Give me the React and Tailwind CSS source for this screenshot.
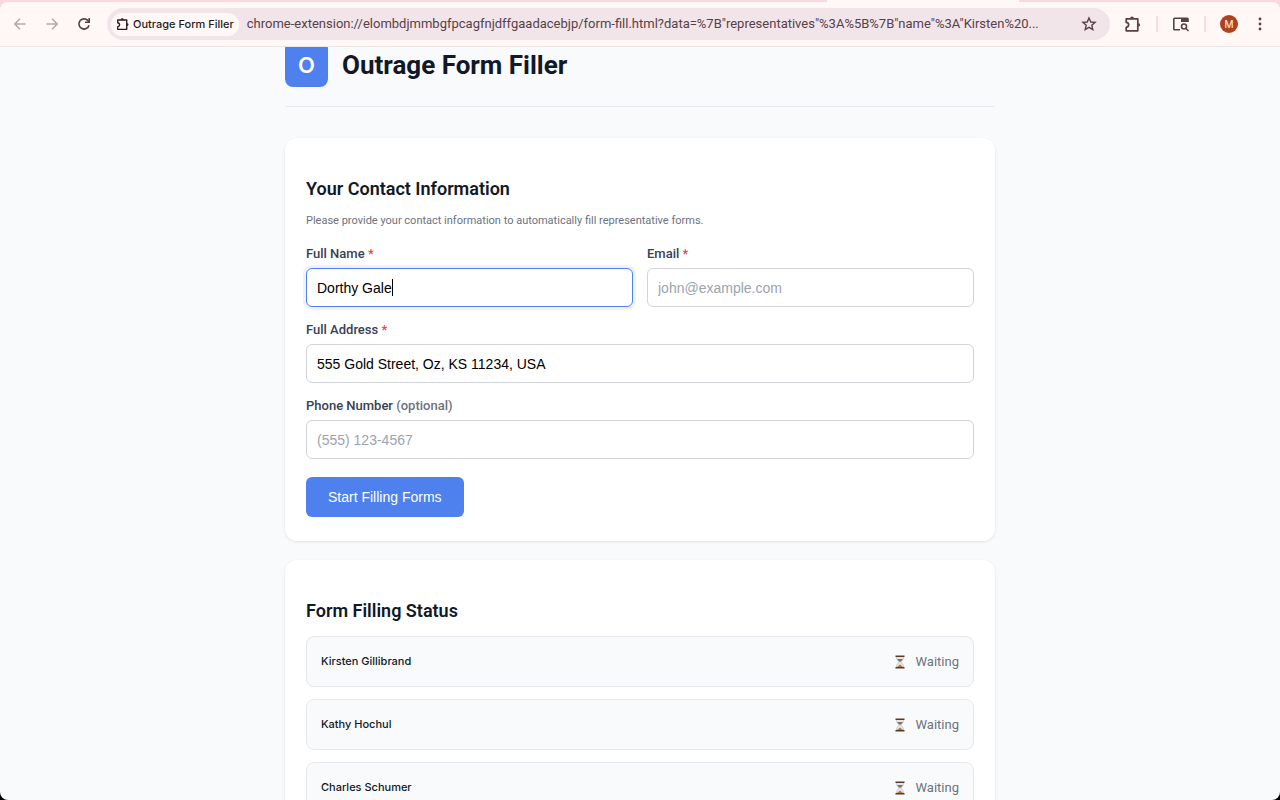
import React from "react";

const INPUT =
  "block h-[39px] w-full rounded-md border bg-white px-2.5 font-['Liberation_Sans',Arial,sans-serif] text-sm text-black caret-transparent placeholder:text-[#9ca3af] focus:outline-none";

function Puzzle({ className }) {
  return (
    <svg className={className} viewBox="0 0 18 18" fill="none" stroke="currentColor" strokeWidth="1.7" strokeLinejoin="round" aria-hidden="true">
      <path d="M2.2 3.900h11.600v11.900H2.200v-3.500c3.300-.4 3.300-4.500 0-4.900z" />
      <path d="M6.100 3.500a1.900 1.900 0 0 1 3.800 0zM14.200 7.900a1.900 1.900 0 0 1 0 3.800z" fill="currentColor" stroke="none" />
    </svg>
  );
}

function Arrow({ className }) {
  return (
    <svg className={className} viewBox="0 0 16 16" fill="none" stroke="currentColor" strokeWidth="1.5" aria-hidden="true">
      <path d="M13.5 8H3M8 2.8 2.8 8 8 13.2" />
    </svg>
  );
}

function Hourglass() {
  return (
    <svg className="h-[14px] w-[10px]" viewBox="0 0 10 14" aria-hidden="true">
      <path d="M1.4 1.5h7.2c0 3-1.1 4-2.8 5.5C7.5 8.4 8.6 9.6 8.6 12.5H1.4C1.4 9.6 2.5 8.4 4.2 7 2.5 5.5 1.4 4.500 1.4 1.5z" fill="#e3e7eb" stroke="#a9adb1" strokeWidth=".5" />
      <path d="M2.200 4h5.600C7.400 5.100 6.500 5.800 5 6.900 3.500 5.800 2.600 5.100 2.200 4z" fill="#8d7157" />
      <path d="M5 9.600 8 12H2z" fill="#b5783a" />
      <path d="M.5.4h9V2h-9zM.5 12h9v1.600h-9z" fill="#563a2b" />
    </svg>
  );
}

function Toolbar() {
  return (
    <header className="relative z-10 shrink-0 bg-[#f9d9df]">
      <div className="ml-[64.6%] h-0.5 w-[15%] bg-[#fff8f6]" />
      <div className="flex h-[45px] items-center rounded-t-lg border-b border-[#efe3e3] bg-[#fff8f6] px-3 font-[Inter,sans-serif] text-[#594045]">
        <button type="button" aria-label="Back" className="text-[#b5a9aa]"><Arrow className="size-4" /></button>
        <button type="button" aria-label="Forward" className="ml-4 text-[#b5a9aa]"><Arrow className="size-4 rotate-180" /></button>
        <button type="button" aria-label="Reload" className="ml-4">
          <svg className="size-4" viewBox="0 0 16 16" fill="none" stroke="currentColor" strokeWidth="1.6" aria-hidden="true">
            <path d="M13 9.200A5.100 5.100 0 1 1 11.700 4.400L13 5.800" />
            <path d="M13.200 2v4.200H9" />
          </svg>
        </button>
        <div className="ml-[15px] flex h-8 min-w-0 flex-1 items-center rounded-full bg-[#f1e5ea] pl-1 pr-[13px]">
          <button type="button" className="flex h-[23px] shrink-0 items-center gap-[3px] rounded-full bg-[#fff8f6] px-[5px] text-[11px] font-medium text-[#251a1c]">
            <Puzzle className="size-3.5" />
            Outrage Form Filler
          </button>
          <span className="ml-2 min-w-0 flex-1 truncate font-[Roboto,sans-serif] text-[13px]">
            chrome-extension://elombdjmmbgfpcagfnjdffgaadacebjp/form-fill.html?data=%7B"representatives"%3A%5B%7B"name"%3A"Kirsten%20...
          </span>
          <button type="button" aria-label="Bookmark" className="ml-3">
            <svg className="size-4" viewBox="0 0 16 16" fill="none" stroke="currentColor" strokeWidth="1.4" aria-hidden="true">
              <path d="m8 2 1.800 4 4.300.400-3.300 2.900 1 4.300L8 11.300l-3.800 2.300 1-4.300L1.900 6.400 6.200 6z" />
            </svg>
          </button>
        </div>
        <button type="button" aria-label="Extensions" className="ml-3.5"><Puzzle className="size-[18px]" /></button>
        <div className="ml-3.5 h-4 w-0.5 bg-[#fadbe0]" />
        <button type="button" aria-label="Search side panel" className="ml-3.5">
          <svg className="size-[18px]" viewBox="0 0 18 18" fill="none" stroke="currentColor" strokeWidth="1.6" aria-hidden="true">
            <path d="M8 14.700H2.600a.8.8 0 0 1-.8-.8V4a.8.8 0 0 1 .8-.8h12.600a.8.8 0 0 1 .8.8v3" />
            <path d="M9 3h7v4H9z" fill="currentColor" stroke="none" />
            <circle cx="12" cy="11.500" r="2.500" />
            <path d="m13.800 13.300 2.700 2.700" />
          </svg>
        </button>
        <div className="ml-3.5 h-4 w-0.5 bg-[#fadbe0]" />
        <button type="button" aria-label="Profile" className="ml-3.5 grid size-[18px] place-items-center rounded-full bg-[#b3401c] text-[10px] text-white">M</button>
        <button type="button" aria-label="Menu" className="ml-3.5">
          <svg className="size-4" viewBox="0 0 16 16" fill="currentColor" aria-hidden="true">
            <circle cx="8" cy="3" r="1.400" /><circle cx="8" cy="8" r="1.400" /><circle cx="8" cy="13" r="1.400" />
          </svg>
        </button>
      </div>
    </header>
  );
}

function Field({ id, label, required, optional, active, ...rest }) {
  return (
    <div>
      <label htmlFor={id} className="mb-1 block text-[13px] leading-5 font-medium text-[#374151]">
        {label} {required && <span className="text-[#ef4444]">*</span>}
        {optional && <span className="text-[#6b7280]">(optional)</span>}
      </label>
      <div className="relative">
        <input
          id={id}
          className={`${INPUT} ${active ? "border-[#4e80ee] shadow-[0_0_0_3px_rgba(78,128,238,0.1)]" : "border-[#d1d5db]"}`}
          {...rest}
        />
        {active && <span className="absolute top-[11px] left-[86px] h-[17px] w-px bg-black" />}
      </div>
    </div>
  );
}

const CARD = "rounded-xl bg-white px-[21px] shadow-[0_1px_3px_rgba(0,0,0,0.1)]";

export default function App() {
  return (
    <div className="flex h-screen flex-col overflow-hidden bg-black">
      <Toolbar />
      <main className="min-h-0 flex-1 overflow-hidden rounded-b-lg bg-[#f9fafc] font-[Roboto,sans-serif]">
        <div className="mx-auto -mt-1.5 max-w-[710px]">
          <div className="mb-[31px] flex items-center gap-3.5 border-b border-[#e5e7eb] pb-[19px]">
            <div className="grid h-[46px] w-[43px] place-items-center rounded-lg bg-[#4e80ee] pt-0.5 font-[Inter,sans-serif] text-[22px] font-semibold text-white">O</div>
            <h1 className="pt-0.5 text-[26px] font-bold text-[#111827]">Outrage Form Filler</h1>
          </div>

          <form className={`${CARD} pt-[37px] pb-6`} onSubmit={(e) => e.preventDefault()}>
            <h2 className="text-lg leading-7 font-semibold text-[#111827]">Your Contact Information</h2>
            <p className="mt-2 mb-[13px] text-[11px] leading-5 text-[#6b7280]">
              Please provide your contact information to automatically fill representative forms.
            </p>
            <div className="flex flex-col gap-[13px]">
              <div className="grid grid-cols-2 gap-3.5">
                <Field id="name" label="Full Name" required defaultValue="Dorthy Gale" autoFocus active />
                <Field id="email" type="email" label="Email" required placeholder="john@example.com" />
              </div>
              <Field id="address" label="Full Address" required defaultValue="555 Gold Street, Oz, KS 11234, USA" />
              <Field id="phone" type="tel" label="Phone Number" optional placeholder="(555) 123-4567" />
            </div>
            <button type="submit" className="mt-[18px] block h-10 rounded-md bg-[#4e80ee] px-[22px] font-['Liberation_Sans',Arial,sans-serif] text-sm text-white">
              Start Filling Forms
            </button>
          </form>

          <section className={`${CARD} mt-[19px] pt-[37px] pb-6`}>
            <h2 className="text-lg leading-7 font-semibold text-[#111827]">Form Filling Status</h2>
            <ul className="mt-[11px] flex flex-col gap-3">
              {["Kirsten Gillibrand", "Kathy Hochul", "Charles Schumer"].map((name) => (
                <li key={name} className="flex h-[51px] items-center justify-between rounded-lg border border-[#e5e7eb] bg-[#f9fafc] px-3.5">
                  <span className="font-[Inter,sans-serif] text-[11px] font-medium text-[#111827]">{name}</span>
                  <span className="flex items-center gap-[11px] text-[13px] text-[#6b7280]"><Hourglass />Waiting</span>
                </li>
              ))}
            </ul>
          </section>
        </div>
      </main>
    </div>
  );
}
